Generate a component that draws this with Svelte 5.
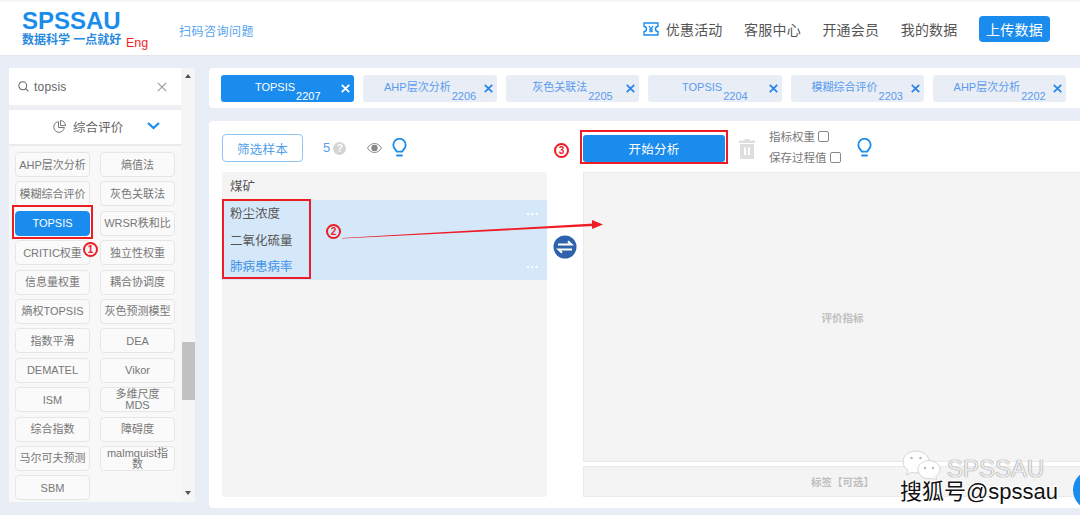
<script lang="ts">
  // SPSSAU analysis page: method list on the left, variable picker on the right.
  const nav = ['客服中心', '开通会员', '我的数据'];
  const tabs = [
    { name: 'TOPSIS', no: 2207, active: true },
    { name: 'AHP层次分析', no: 2206 },
    { name: '灰色关联法', no: 2205 },
    { name: 'TOPSIS', no: 2204 },
    { name: '模糊综合评价', no: 2203 },
    { name: 'AHP层次分析', no: 2202 }
  ];
  const methods = [
    'AHP层次分析', '熵值法', '模糊综合评价', '灰色关联法', 'TOPSIS', 'WRSR秩和比',
    'CRITIC权重', '独立性权重', '信息量权重', '耦合协调度', '熵权TOPSIS', '灰色预测模型',
    '指数平滑', 'DEA', 'DEMATEL', 'Vikor', 'ISM', '多维尺度 MDS',
    '综合指数', '障碍度', '马尔可夫预测', 'malmquist指数', 'SBM'
  ];
  const vars = [
    { name: '粉尘浓度', more: true },
    { name: '二氧化硫量' },
    { name: '肺病患病率', more: true, link: true }
  ];
</script>

{#snippet bulb()}
  <svg class="bulb" width="15" height="20" viewBox="0 0 15 20" fill="none" stroke="#1a8cee" stroke-width="1.8">
    <path d="M4.6 13.6c0-1.6-3.3-3-3.3-6.700a6.200 6.200 0 0 1 12.400 0c0 3.700-3.300 5.100-3.300 6.700z" stroke-linejoin="round"/>
    <path d="M5 17.500h5" stroke-linecap="round"/>
  </svg>
{/snippet}

<div class="page">
  <header>
    <div class="logo">
      <div class="brand">SPSSAU</div>
      <div class="slogan">数据科学 一点就好</div>
    </div>
    <span class="eng">Eng</span>
    <a class="ask" href="#ask">扫码咨询问题</a>
    <nav>
      <span class="promo">
        <svg width="16" height="14" viewBox="0 0 16 14" fill="none" stroke="#1a8cee" stroke-width="1.400">
          <path d="M1 1h14v3.500a2.500 2.500 0 0 0 0 5V13H1V9.500a2.500 2.500 0 0 0 0-5z" stroke-linejoin="round"/>
          <path d="M5.800 3.800 8 6.600l2.200-2.800M8 6.600v4M6 7.300h4M6 9.100h4" stroke-width="1.100"/>
        </svg>
        优惠活动
      </span>
      {#each nav as item}<span>{item}</span>{/each}
      <button class="upload">上传数据</button>
    </nav>
  </header>

  <div class="body">
    <aside>
      <div class="side-inner">
        <div class="search">
          <svg width="11" height="11" viewBox="0 0 12 12" fill="none" stroke="#666" stroke-width="1.100">
            <circle cx="5.200" cy="5.200" r="4.300"/><path d="m8.400 8.400 3 3"/>
          </svg>
          <span class="q">topsis</span>
          <svg class="clear" width="10" height="10" viewBox="0 0 10 10" stroke="#999" stroke-width="1.100">
            <path d="m.8.800 8.400 8.400M9.200.800.800 9.200"/>
          </svg>
        </div>
        <div class="group">
          <svg width="13" height="13" viewBox="0 0 13 13" fill="none" stroke="#777" stroke-width="1">
            <path d="M5.500 1.700a5.300 5.300 0 1 0 5.800 5.800H5.500z"/><path d="M7.500.6v5h5a5 5 0 0 0-5-5z"/>
          </svg>
          <span>综合评价</span>
          <svg class="chev" width="13" height="8" viewBox="0 0 13 8" fill="none" stroke="#1a8cee" stroke-width="2.200">
            <path d="m1 1 5.500 5L12 1"/>
          </svg>
        </div>
        <div class="methods">
          {#each methods as m}
            <button class="method" class:on={m === 'TOPSIS'}>{m}</button>
          {/each}
        </div>
      </div>
      <div class="scroll">
        <span class="up"></span>
        <span class="thumb"></span>
        <span class="down"></span>
      </div>
    </aside>

    <main>
      <div class="tabs">
        {#each tabs as t}
          <div class="tab" class:active={t.active}>
            <span class="tname">{t.name}<sub>{t.no}</sub></span>
            <svg class="tclose" width="9" height="9" viewBox="0 0 9 9" stroke="currentColor" stroke-width="1.800">
              <path d="m.8.800 7.400 7.400M8.200.800.800 8.200"/>
            </svg>
          </div>
        {/each}
      </div>

      <section class="panel">
        <div class="left">
          <div class="tools">
            <button class="filter">筛选样本</button>
            <span class="count">5</span>
            <span class="help">?</span>
            <svg class="eye" width="15" height="10" viewBox="0 0 15 10">
              <path d="M.5 5C2.300 2 4.700.5 7.500.5S12.700 2 14.500 5c-1.800 3-4.200 4.500-7 4.500S2.300 8 .5 5z" fill="none" stroke="#888" stroke-width="1"/>
              <circle cx="7.500" cy="5" r="3.200" fill="#888"/>
            </svg>
            {@render bulb()}
          </div>
          <div class="list">
            <div class="lhead">煤矿</div>
            <div class="sel">
              {#each vars as v}
                <div class="var" class:link={v.link}>
                  {v.name}
                  {#if v.more}<span class="dots">···</span>{/if}
                </div>
              {/each}
            </div>
          </div>
        </div>

        <div class="mid">
          <svg width="24" height="24" viewBox="0 0 24 24">
            <circle cx="12" cy="12" r="11.500" fill="#2e62ab"/>
            <path d="M5 9.500h13.500L15 6.300M19 14.500H5.500L9 17.700" fill="none" stroke="#fff" stroke-width="1.900"/>
          </svg>
        </div>

        <div class="right">
          <div class="tools">
            <button class="start">开始分析</button>
            <svg class="trash" width="16" height="20" viewBox="0 0 16 20" fill="#dedede">
              <path d="M5.500 0h5v1.500H16v2.500H0V1.500h5.500zM1 5h14v15H1zm4 3.500v7.500h2V8.500zm4 0v7.500h2V8.500z" fill-rule="evenodd"/>
            </svg>
            <div class="opts">
              <label>指标权重<i></i></label>
              <label>保存过程值<i></i></label>
            </div>
            {@render bulb()}
          </div>
          <div class="target">评价指标</div>
          <div class="tag">标签【可选】</div>
        </div>
      </section>
    </main>
  </div>

  <!-- tutorial marks drawn on top of the screenshot -->
  <div class="mark box-1"></div>
  <span class="mark num n1">1</span>
  <div class="mark box-2"></div>
  <span class="mark num n2">2</span>
  <div class="mark box-3"></div>
  <span class="mark num n3">3</span>
  <svg class="mark arrow" width="270" height="24" viewBox="0 0 270 24">
    <path d="M0 20 252 5.500v2.400L0 20.600z" fill="#ee1c25"/>
    <path d="M250 2l11 4.500L250 11z" fill="#ee1c25"/>
  </svg>

  <span class="fab"></span>

  <svg class="mark wechat" width="40" height="32" viewBox="0 0 40 32">
    <path d="M14 1C6.800 1 1 5.800 1 11.800c0 3.400 1.900 6.400 4.800 8.400L4.500 25l5.100-2.700c1.400.4 2.900.6 4.400.6 7.200 0 13-4.900 13-11S21.200 1 14 1z" fill="#fff" fill-opacity=".9" stroke="#ccc" stroke-width=".8"/>
    <path d="M27 10.500c-6.100 0-11 4.100-11 9.100s4.900 9.100 11 9.100c1.200 0 2.400-.2 3.500-.5l4.300 2.300-1.100-3.900c2.600-1.700 4.300-4.100 4.300-7 0-5-4.900-9.100-11-9.100z" fill="#fff" fill-opacity=".95" stroke="#ccc" stroke-width=".8"/>
    <circle cx="9.500" cy="8" r="1.300" fill="#bbb"/><circle cx="18.500" cy="8" r="1.300" fill="#bbb"/>
    <circle cx="23" cy="18" r="1.200" fill="#bbb"/><circle cx="31" cy="18" r="1.200" fill="#bbb"/>
  </svg>
  <span class="mark wm-name">SPSSAU</span>
  <span class="mark wm-sohu">搜狐号@spssau</span>
</div>

<style>
  :global(body) { margin: 0; background: #e9edf5; }
  .page {
    position: relative; width: 1080px; height: 515px; overflow: hidden;
    font-family: "Liberation Sans", "Noto Sans CJK SC", sans-serif;
    background: #e9edf5; color: #666;
  }
  button { font-family: inherit; cursor: pointer; }

  header {
    display: flex; align-items: center; height: 53px; box-sizing: content-box;
    background: #fff; border-top: 2px solid #f6f6f6; border-bottom: 1px solid #e3e6ee;
    padding-left: 22px; padding-right: 30px;
  }
  .logo { width: 104px; color: #1a8cee; margin-top: -1px; }
  .brand { font: 700 24px/22px "Liberation Sans", sans-serif; }
  .slogan { font-size: 12px; font-weight: 700; line-height: 14px; margin-top: 1px; white-space: nowrap; color: #2a8ae0; }
  .eng { color: #f01f27; font-size: 12.500px; margin-top: 28px; width: 53px; }
  .ask { color: #56a4ee; font-size: 12px; text-decoration: none; letter-spacing: .5px; margin-top: 3px; }
  nav { margin-left: auto; display: flex; align-items: center; gap: 21.500px; font-size: 14px; color: #555; letter-spacing: .2px; }
  .promo { display: flex; align-items: center; gap: 7px; }
  .upload {
    width: 71px; height: 26px; padding: 0; border: 0; border-radius: 4px;
    background: #1a8cee; color: #fff; font-size: 14px; letter-spacing: .2px;
  }

  .body { display: flex; padding: 12px 0 0 9px; gap: 14px; }

  aside { display: flex; width: 186px; height: 434px; flex: none; }
  .side-inner { width: 172px; background: #f8f8f8; }
  .search {
    display: flex; align-items: center; height: 37px; background: #fff;
    padding: 0 14px 0 9px; font-size: 12px; color: #666;
    margin-bottom: 5px; box-shadow: 0 5px 0 #edeff5;
  }
  .q { margin-left: 5px; letter-spacing: .2px; }
  .clear { margin-left: auto; }
  .group {
    display: flex; align-items: center; height: 34px; box-sizing: content-box; background: #fff;
    border-bottom: 2px solid #eaeaea; padding-left: 44px; font-size: 12.500px; color: #666;
  }
  .group > * { position: relative; top: -1px; }
  .group span { margin-left: 7px; letter-spacing: .100px; }
  .chev { margin-left: 24px; }
  .methods {
    display: grid; grid-template-columns: 75px 75px; column-gap: 10px; row-gap: 4.400px;
    padding: 6px 0 0 6px;
  }
  .method {
    height: 25px; padding: 1px 1px 0; background: #fafafa; color: #777;
    border: 1px solid #e6e6e6; border-radius: 4px;
    font-size: 11px; line-height: 11px; overflow: hidden;
  }
  .method.on { background: #1a8cee; border-color: #1a8cee; color: #fff; }
  .scroll {
    position: relative; width: 14px; background: #f5f5f5;
  }
  .scroll .up, .scroll .down { position: absolute; left: 4px; width: 0; height: 0; border-left: 3.500px solid transparent; border-right: 3.500px solid transparent; }
  .up { top: 6px; border-bottom: 4px solid #555; }
  .down { bottom: 7px; border-top: 4px solid #555; }
  .thumb { position: absolute; left: 1px; right: 0; top: 274px; height: 58px; background: #c1c1c1; }

  main { flex: 1; min-width: 0; }
  .tabs {
    display: flex; gap: 9px; height: 40px; box-sizing: border-box;
    background: #fff; padding: 7px 0 0 12px; border-radius: 4px 0 0 4px; overflow: hidden;
  }
  .tab {
    position: relative; flex: 0 0 133.400px; height: 27px; border-radius: 3px; overflow: hidden;
    background: #e9edf5; color: #5b9bee; font-size: 11px; text-align: center;
  }
  .tab.active { background: #1a8cee; color: #fff; }
  .tname { display: block; line-height: 25px; white-space: nowrap; }
  .tname sub { font-size: 11px; vertical-align: -9px; line-height: 0; margin-left: 1px; }
  .tclose { position: absolute; right: 4px; top: 9px; color: #2b86ea; }
  .active .tclose { color: #fff; }

  .panel {
    display: flex; margin-top: 13px; height: 387px; box-sizing: border-box;
    background: #fff; padding: 13px 0 11px 13px; border-radius: 4px 0 0 4px;
  }
  .left { width: 325px; flex: none; display: flex; flex-direction: column; }
  .mid { width: 36px; flex: none; display: flex; justify-content: center; padding-top: 101px; }
  .mid svg { margin-left: -1px; }
  .right { flex: 1; min-width: 0; display: flex; flex-direction: column; }

  .tools { display: flex; align-items: center; height: 28px; margin-bottom: 10px; }
  .filter {
    width: 81px; height: 28px; padding: 0; background: #fff; color: #4f9fe9;
    border: 1px solid #8ec5f5; border-radius: 4px; font-size: 12.500px; letter-spacing: .2px;
  }
  .count { margin-left: 20px; color: #5b9bee; font-size: 13px; margin-top: -2px; }
  .help {
    width: 13px; height: 13px; margin-left: 3px; border-radius: 50%; background: #d4d4d4;
    color: #fff; font-size: 10px; font-weight: 700; line-height: 13px; text-align: center;
  }
  .eye { margin-left: 21px; }
  .bulb { margin-left: 10px; }

  .list { flex: 1; background: #f4f4f4; border-radius: 3px; }
  .lhead { height: 28px; line-height: 30px; padding-left: 8px; font-size: 12.500px; color: #555; }
  .sel { background: #d5e8fa; height: 80px; }
  .var {
    position: relative; height: 26.600px; line-height: 29px; padding-left: 8px;
    font-size: 12.500px; color: #555;
  }
  .var.link { color: #3d91e6; }
  .dots { position: absolute; right: 8px; top: -1px; color: #fff; font-size: 13px; font-weight: 700; letter-spacing: 0; }

  .start {
    width: 142px; height: 27px; padding: 0; border: 0; border-radius: 3px;
    background: #1a8cee; color: #fff; font-size: 12.500px; letter-spacing: .2px;
  }
  .trash { margin-left: 14px; margin-top: 2px; }
  .opts { display: flex; flex-direction: column; gap: 6px; margin: -3px 0 0 14px; font-size: 11.500px; color: #777; }
  .opts label { display: flex; align-items: center; gap: 3px; height: 15px; white-space: nowrap; }
  .opts i { width: 9px; height: 9px; border: 1px solid #888; border-radius: 2px; background: #fff; }
  .right .bulb { margin-left: 16px; }

  .target {
    flex: 1; display: flex; align-items: center; justify-content: center;
    background: #f4f4f4; border: 1px solid #ebebeb; border-right: 0;
    color: #bfbfbf; font-size: 10.500px; font-weight: 700; padding-left: 21px;
  }
  .tag {
    flex: none; height: 31px; box-sizing: border-box; margin-top: 4px;
    display: flex; align-items: center; justify-content: center;
    background: #f4f4f4; border: 1px solid #ebebeb; border-right: 0;
    color: #bfbfbf; font-size: 10.500px; font-weight: 700; padding-left: 21px;
  }

  .mark { position: absolute; }
  .box-1, .box-2, .box-3 { border: 2px solid #ee1c25; box-sizing: border-box; }
  .box-1 { left: 12px; top: 205px; width: 81px; height: 34px; }
  .box-2 { left: 222px; top: 199px; width: 89px; height: 80px; }
  .box-3 { left: 580px; top: 130px; width: 148px; height: 34px; }
  .num {
    width: 15px; height: 15px; box-sizing: border-box; border: 2px solid #ee1c25; border-radius: 50%;
    color: #ee1c25; font-size: 10px; line-height: 11px; font-weight: 700; text-align: center;
  }
  .n1 { left: 83px; top: 242px; }
  .n2 { left: 326px; top: 224px; }
  .n3 { left: 554px; top: 143px; }
  .arrow { left: 342px; top: 218px; }

  .fab { position: absolute; left: 1073px; top: 470px; width: 40px; height: 40px; border-radius: 50%; background: #1a8cee; }

  .wechat { left: 902px; top: 450px; }
  .wm-name {
    left: 947px; top: 458px; font-size: 24px; line-height: 22px;
    color: rgba(255,255,255,.85); text-shadow: 0 0 1px #888, 0 0 1px #888;
  }
  .wm-sohu {
    left: 900px; top: 481px; font-size: 22px; line-height: 22px; color: #111; white-space: nowrap;
    text-shadow: 1px 1px 0 #fff, -1px -1px 0 #fff, 1px -1px 0 #fff, -1px 1px 0 #fff;
  }
</style>
